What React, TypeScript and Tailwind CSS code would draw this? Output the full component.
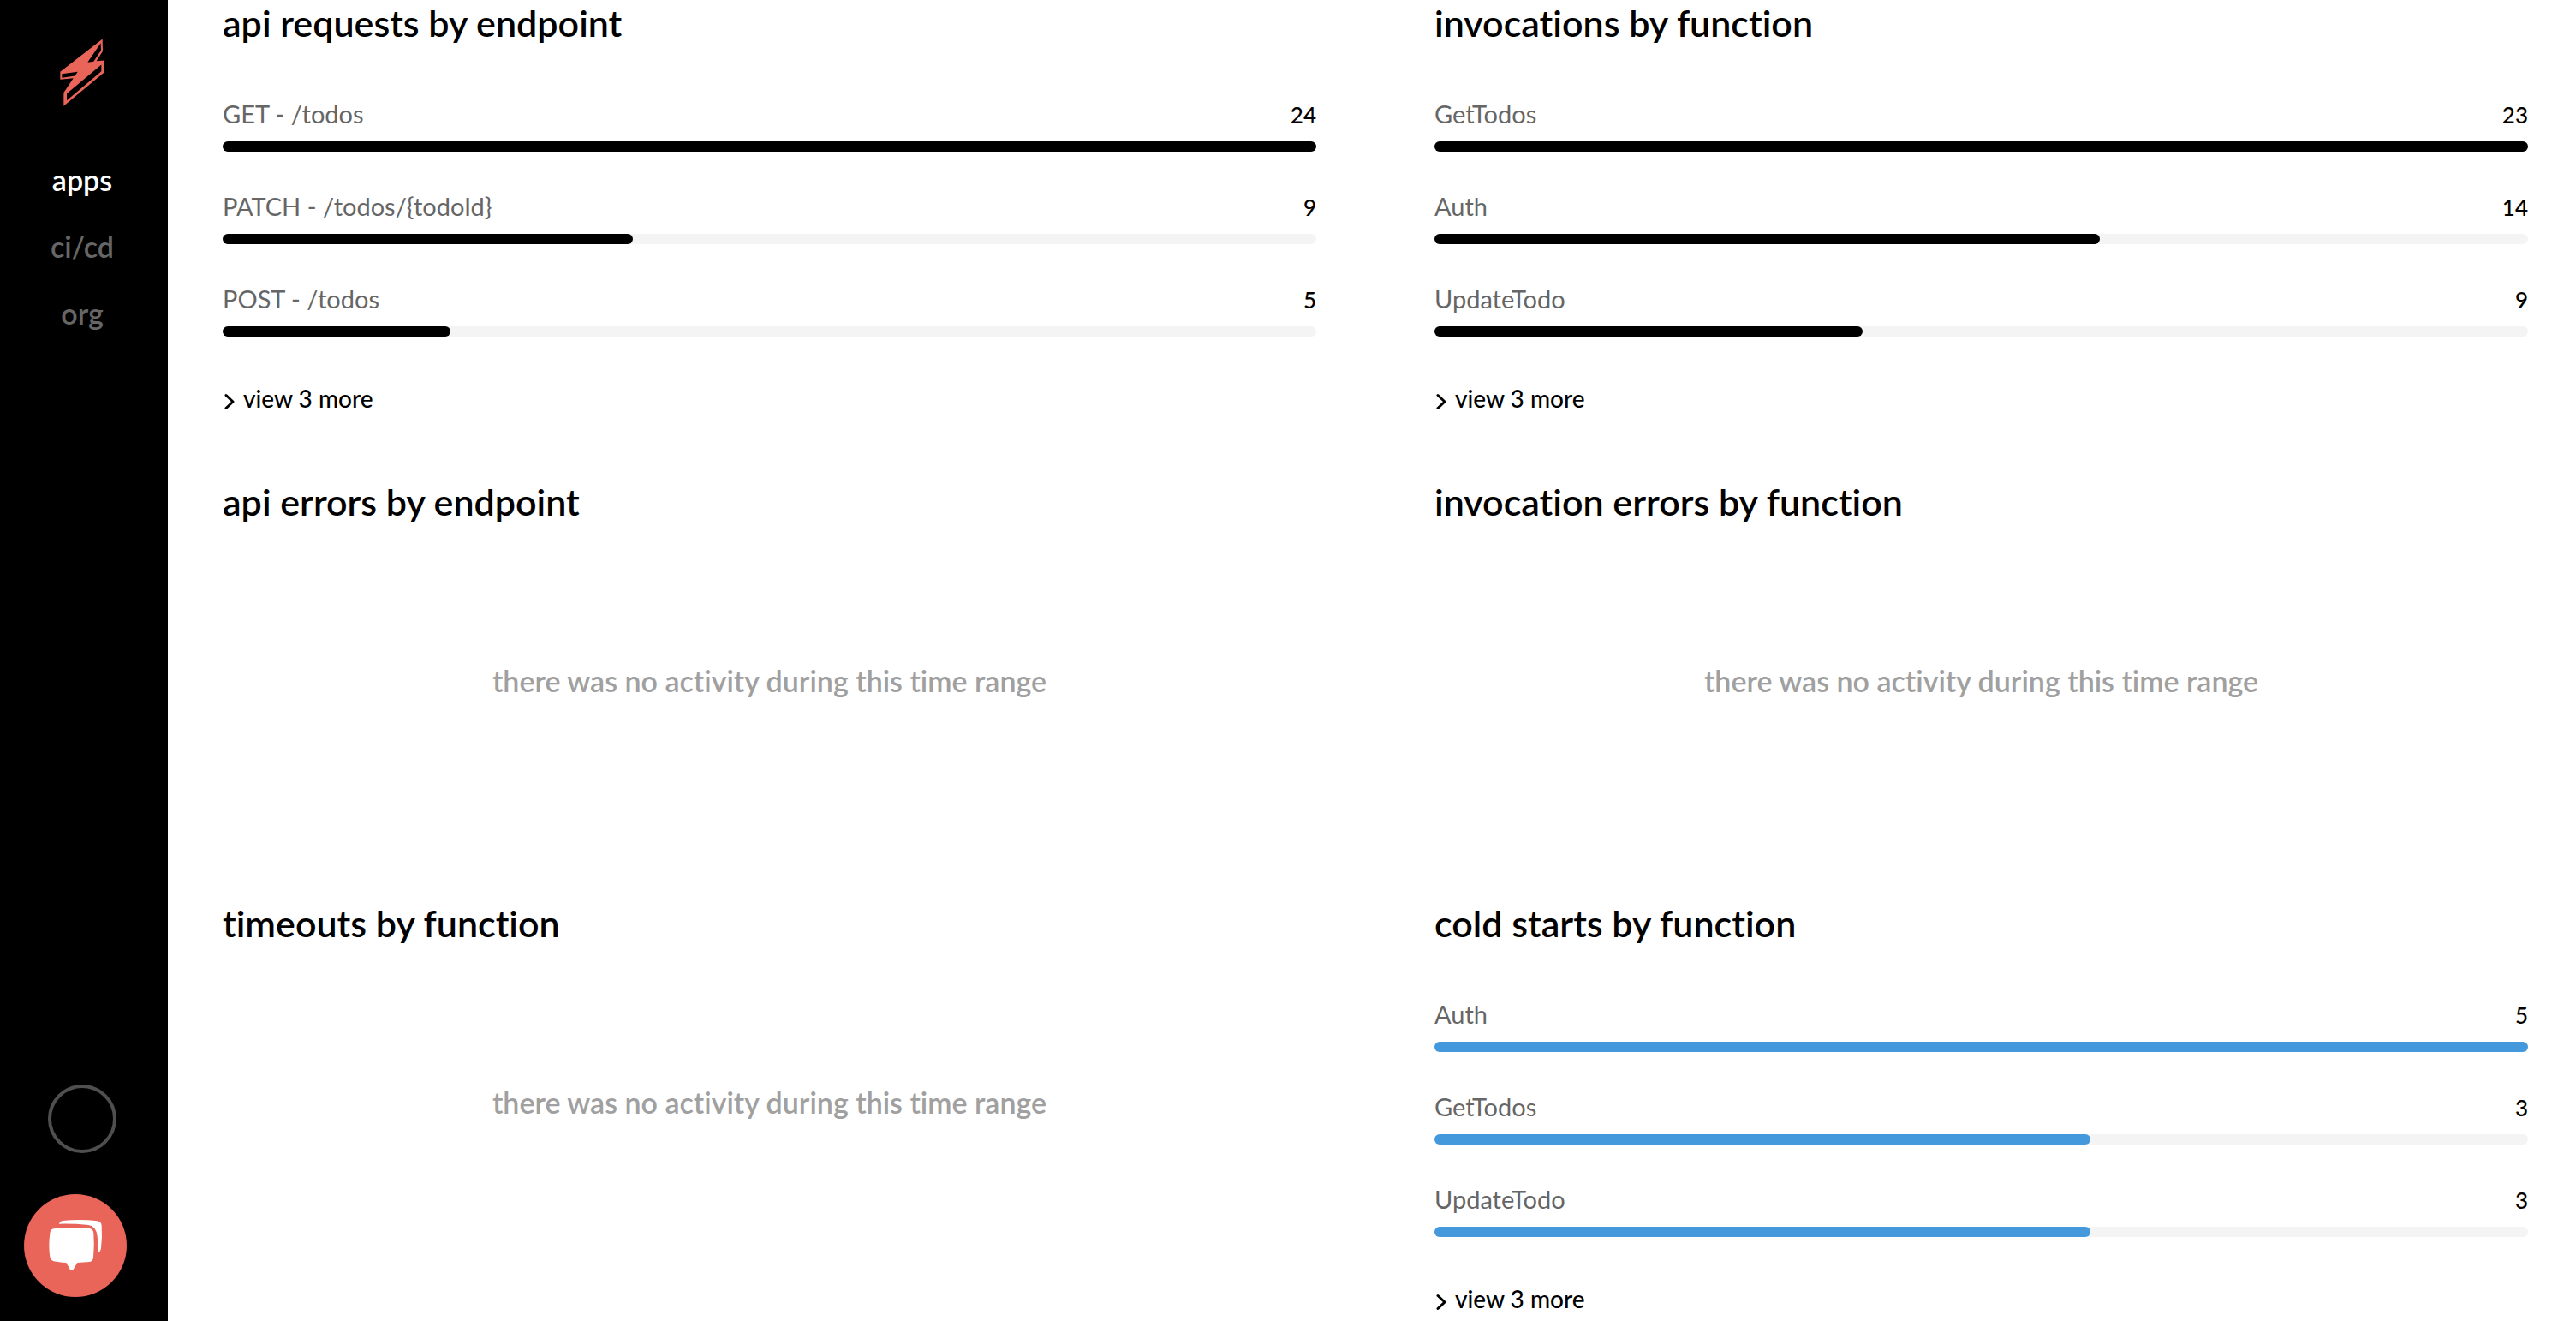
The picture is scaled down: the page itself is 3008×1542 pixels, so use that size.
type Item = { label: string; count: number };
type Section = { title: string; items?: Item[]; fill?: string };

const sections: Section[] = [
  {
    title: "api requests by endpoint",
    fill: "bg-black",
    items: [
      { label: "GET - /todos", count: 24 },
      { label: "PATCH - /todos/{todoId}", count: 9 },
      { label: "POST - /todos", count: 5 },
    ],
  },
  {
    title: "invocations by function",
    fill: "bg-black",
    items: [
      { label: "GetTodos", count: 23 },
      { label: "Auth", count: 14 },
      { label: "UpdateTodo", count: 9 },
    ],
  },
  { title: "api errors by endpoint" },
  { title: "invocation errors by function" },
  { title: "timeouts by function" },
  {
    title: "cold starts by function",
    fill: "bg-[#4499dd]",
    items: [
      { label: "Auth", count: 5 },
      { label: "GetTodos", count: 3 },
      { label: "UpdateTodo", count: 3 },
    ],
  },
];

function Logo() {
  return (
    <svg viewBox="210 136 156 236" className="h-[79px] w-[52px]" aria-hidden="true">
      <path
        fill="#e96459"
        d="M359 137L360 180L338 214L365 212V254L223 372V325L257 274L211 279V252Z"
      />
      <path
        fill="#000"
        d="M353 151L354 177L328 216L307 219ZM217 259L272 252L263 266L217 273ZM355 227V250L234 352V328Z"
      />
    </svg>
  );
}

function ChatIcon() {
  return (
    <svg viewBox="24 18 360 360" className="size-full" fill="#fff" aria-hidden="true">
      <path d="M128 139Q190 131 254 138Q267 141 268 155Q271 195 267 240Q265 253 254 255Q232 257 211 258L197 281Q191 288 185 281L172 258Q145 257 128 253Q118 250 115 238Q109 200 115 155Q116 141 128 139Z" />
      <path d="M147 122Q148 114 160 111Q220 104 282 112Q295 115 296 128Q299 165 294 208Q291 223 282 224Q284 190 281 165Q277 130 250 126Q200 121 147 122Z" />
    </svg>
  );
}

function Bar({ item, max, fill }: { item: Item; max: number; fill: string }) {
  return (
    <li className="flex flex-col gap-3">
      <div className="flex h-10 items-baseline justify-between">
        <span className="text-[29px] leading-10 text-[#666666]">{item.label}</span>
        <span className="text-[26px] font-medium leading-10">{item.count}</span>
      </div>
      <div
        role="progressbar"
        aria-label={item.label}
        aria-valuenow={item.count}
        aria-valuemax={max}
        className="h-3 rounded-full bg-[#f4f4f4]"
      >
        <div
          className={`h-full rounded-full ${fill}`}
          style={{ width: `${(item.count / max) * 100}%` }}
        />
      </div>
    </li>
  );
}

function Panel({ title, items, fill = "bg-black" }: Section) {
  return (
    <section className="min-w-0">
      <h2 className="text-[43px] font-semibold leading-[52px]">{title}</h2>
      {items ? (
        <>
          <ul className="mt-[60px] flex flex-col gap-11">
            {items.map((item) => (
              <Bar key={item.label} item={item} max={items[0].count} fill={fill} />
            ))}
          </ul>
          <button
            type="button"
            className="mt-[52px] flex items-center gap-2.5 pl-0.5 text-[28px] font-medium leading-10"
          >
            <svg
              viewBox="0 0 12 20"
              className="mt-2 h-5 w-3"
              fill="none"
              stroke="currentColor"
              strokeWidth="3"
              strokeLinecap="round"
              strokeLinejoin="round"
              aria-hidden="true"
            >
              <path d="M2 2.5L10 10L2 17.5" />
            </svg>
            view 3 more
          </button>
        </>
      ) : (
        <div className="flex h-[365px] items-center justify-center">
          <p className="text-[34px] font-semibold leading-10 text-[#a0a0a0]">
            there was no activity during this time range
          </p>
        </div>
      )}
    </section>
  );
}

export default function App() {
  return (
    <div className="flex min-h-screen bg-white font-['Lato',sans-serif] text-black [font-variant-ligatures:none]">
      <aside className="flex w-[196px] shrink-0 flex-col items-center bg-black pb-[196px] pr-1 pt-[45px]">
        <a href="#home" aria-label="home">
          <Logo />
        </a>
        <nav className="mt-[66px] flex flex-col items-center gap-[38px] text-[34px] font-semibold leading-10 text-[#666666]">
          <a href="#apps" className="text-white">apps</a>
          <a href="#cicd">ci/cd</a>
          <a href="#org">org</a>
        </nav>
        <button
          type="button"
          aria-label="account"
          className="mt-auto size-20 rounded-full border-4 border-[#4f4f4f]"
        />
      </aside>
      <main className="grid flex-1 grid-cols-2 content-start gap-x-[138px] gap-y-[75px] pl-16 pr-14 pt-px">
        {sections.map((s) => (
          <Panel key={s.title} {...s} />
        ))}
      </main>
      <button
        type="button"
        aria-label="open chat"
        className="fixed bottom-7 left-7 size-[120px] rounded-full bg-[#e96459]"
      >
        <ChatIcon />
      </button>
    </div>
  );
}
